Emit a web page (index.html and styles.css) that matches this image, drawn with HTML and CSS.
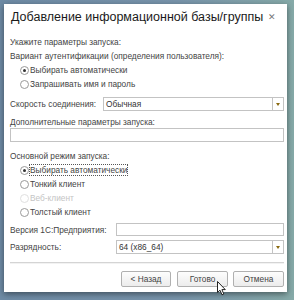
FILE: index.html
```html
<!DOCTYPE html>
<html lang="ru">
<head>
    <meta charset="UTF-8">
    <title>Добавление информационной базы/группы</title>
    <link rel="stylesheet" href="styles.css">
</head>
<body>
    <div class="dialog">
        <div class="header">
            <span class="title">Добавление информационной базы/группы</span>
            <span class="close">&#x2715;</span>
        </div>

        <div class="content">
            <div class="line">Укажите параметры запуска:</div>
            <div class="line">Вариант аутентификации (определения пользователя):</div>

            <div class="radios first">
                <div class="radio checked"><span class="dot"></span>Выбирать автоматически</div>
                <div class="radio"><span class="dot"></span>Запрашивать имя и пароль</div>
            </div>

            <div class="row speed">
                <span class="label label-speed">Скорость соединения:</span>
                <div class="select">
                    <span class="value">Обычная</span>
                    <span class="drop"><span class="arrow"></span></span>
                </div>
            </div>

            <div class="line extra-label">Дополнительные параметры запуска:</div>
            <div class="input wide"></div>

            <div class="line mode-label">Основной режим запуска:</div>
            <div class="radios">
                <div class="radio checked"><span class="dot"></span><span class="focus">Выбирать автоматически</span></div>
                <div class="radio"><span class="dot"></span>Тонкий клиент</div>
                <div class="radio disabled"><span class="dot"></span>Веб-клиент</div>
                <div class="radio"><span class="dot"></span>Толстый клиент</div>
            </div>

            <div class="row version">
                <span class="label label-version">Версия 1С:Предприятия:</span>
                <div class="input"></div>
            </div>
            <div class="row bits">
                <span class="label label-version">Разрядность:</span>
                <div class="select">
                    <span class="value">64 (x86_64)</span>
                    <span class="drop"><span class="arrow"></span></span>
                </div>
            </div>

            <div class="separator"></div>

            <div class="buttons">
                <button class="btn back">&lt; Назад</button>
                <button class="btn done">Готово</button>
                <button class="btn">Отмена</button>
                <svg class="cursor" width="10" height="15" viewBox="0 0 10 15">
                    <path d="M0.5 0.5 L0.5 11.5 L3 9.2 L5 13.8 L6.8 13 L4.9 8.6 L8.3 8.6 Z" fill="#fff" stroke="#222" stroke-width="1"/>
                </svg>
            </div>
        </div>
    </div>
</body>
</html>
```

FILE: styles.css
```css
body {
    margin: 0;
    padding: 4px 7px 8px 4px;
    height: 300px;
    box-sizing: border-box;
    background: linear-gradient(to right, #6e8ba5 0%, #7894ab 60%, #86aaa8 100%);
    font-family: "Liberation Sans", Arial, sans-serif;
    overflow: hidden;
}
.dialog {
    width: 283px;
    height: 288px;
    background: #fff;
    box-shadow: 0 2px 6px rgba(0, 0, 0, 0.45);
    box-sizing: border-box;
    padding: 0 3px 0 6px;
}
.header {
    height: 26px;
    display: flex;
    align-items: center;
    justify-content: space-between;
    padding-left: 1px;
    margin-bottom: 5px;
}
.title {
    font-size: 12.5px;
    color: #1a1a1a;
}
.close {
    font-size: 9px;
    color: #777;
    margin-right: 8px;
}
.content {
    font-size: 8.3px;
    color: #444;
}
.line {
    height: 14px;
    line-height: 14px;
    white-space: nowrap;
}
.radios {
    display: flex;
    flex-direction: column;
}
.radio {
    height: 14px;
    display: flex;
    align-items: center;
    padding-left: 10px;
    white-space: nowrap;
}
.dot {
    width: 7px;
    height: 7px;
    border: 1px solid #9a9a9a;
    border-radius: 50%;
    margin-right: 1px;
    display: flex;
    align-items: center;
    justify-content: center;
    flex-shrink: 0;
}
.radio.checked .dot::after {
    content: "";
    width: 3px;
    height: 3px;
    border-radius: 50%;
    background: #333;
}
.radio.disabled {
    color: #c4c4c4;
}
.radio.disabled .dot {
    border-color: #e0e0e0;
}
.focus {
    outline: 1px dotted #555;
    outline-offset: 0;
    line-height: 10px;
}
.row {
    display: flex;
    align-items: center;
    height: 14px;
}
.speed {
    margin-top: 6px;
}
.label {
    flex-shrink: 0;
}
.label-speed {
    width: 93px;
}
.label-version {
    width: 106px;
}
.select, .input {
    flex: 1;
    height: 14px;
    box-sizing: border-box;
    border: 1px solid #c3c3c3;
    background: #fff;
}
.select {
    display: flex;
    align-items: center;
}
.value {
    flex: 1;
    padding-left: 2px;
    color: #333;
}
.drop {
    width: 10px;
    height: 100%;
    border-left: 1px solid #c3c3c3;
    display: flex;
    align-items: center;
    justify-content: center;
}
.arrow {
    width: 0;
    height: 0;
    border-left: 2px solid transparent;
    border-right: 2px solid transparent;
    border-top: 3px solid #8a6a10;
}
.extra-label {
    margin-top: 4px;
    height: 13px;
    line-height: 15px;
}
.input.wide {
    width: 100%;
}
.mode-label {
    margin-top: 7px;
}
.version {
    margin-top: 4px;
    height: 13px;
}
.version .input {
    height: 13px;
}
.bits {
    margin-top: 4px;
}
.separator {
    margin-top: 8px;
    height: 1px;
    background: #d4d4d4;
    border-bottom: 1px solid #f2f2f2;
}
.buttons {
    position: relative;
    margin-top: 7px;
    display: flex;
    justify-content: flex-end;
    gap: 5px;
}
.btn {
    width: 51px;
    height: 16px;
    padding: 0;
    font-family: "Liberation Sans", Arial, sans-serif;
    font-size: 8.3px;
    color: #444;
    border: 1px solid #b0b0b0;
    border-radius: 2px;
    background: linear-gradient(#fdfdfd, #ececec);
}
.back {
    width: 50px;
    margin-right: 1px;
}
.cursor {
    position: absolute;
    left: 207px;
    top: 10px;
}
```
